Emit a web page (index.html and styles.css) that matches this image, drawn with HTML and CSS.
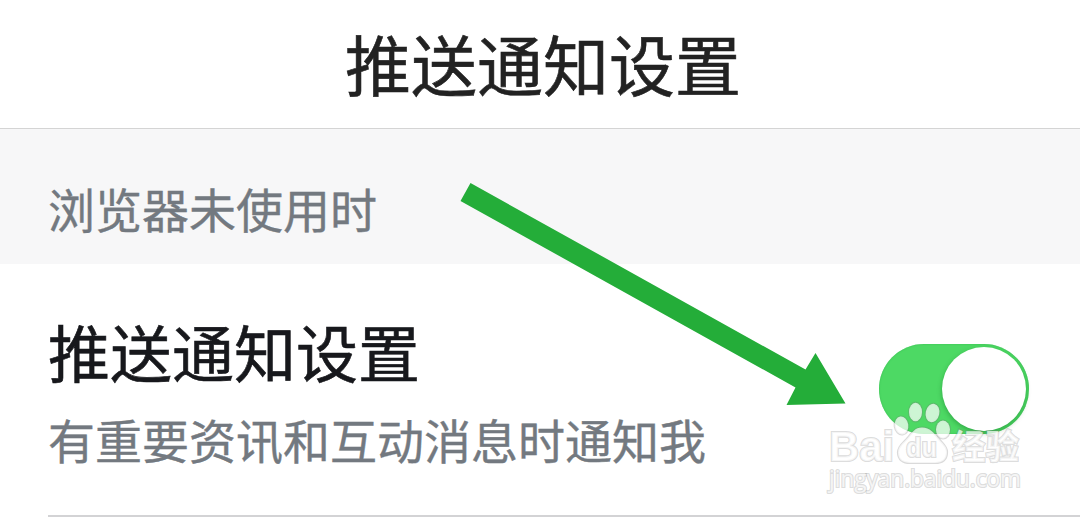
FILE: index.html
```
<!DOCTYPE html>
<html lang="zh-CN">

<head>
    <meta charset="UTF-8">
    <meta name="viewport" content="width=device-width, initial-scale=1.0">
    <title>推送通知设置</title>
    <link rel="stylesheet" href="styles.css">
</head>

<body>
    <header class="header">
        <h1 class="title">推送通知设置</h1>
    </header>
    <div class="section">浏览器未使用时</div>
    <main class="list">
        <div class="item">
            <div class="info">
                <div class="name">推送通知设置</div>
                <div class="desc">有重要资讯和互动消息时通知我</div>
            </div>
            <div class="switch">
                <div class="knob"></div>
            </div>
        </div>
    </main>

    <!-- arrow and watermark lie over the page -->
    <svg class="overlay" width="1080" height="517" viewBox="0 0 1080 517">
        <polygon class="arrow" points="470.5,183 805.5,369.5 815.5,353 845.5,403.5 786.5,405 795.5,387.5 460.5,201" />
        <g class="mark">
            <ellipse cx="901.5" cy="425.5" rx="6.8" ry="9" transform="rotate(-8 901.5 425.5)" />
            <ellipse cx="915.5" cy="412" rx="6.5" ry="9.3" />
            <ellipse cx="932.5" cy="413" rx="6.8" ry="9.3" transform="rotate(12 932.5 413)" />
            <ellipse cx="943" cy="429.5" rx="7" ry="9" />
            <path d="M922 427.5c-7 0-10 5-14 10-4 5-10 8-10 15 0 7 5 10.500 12 10.500h25c8 0 12-4 12-11 0-6-5-9-9-14-4-5-8-10.500-16-10.500z" />
            <text class="logo" x="829" y="461" textLength="65" lengthAdjust="spacingAndGlyphs">Bai</text>
            <text class="du" x="906" y="457" textLength="31" lengthAdjust="spacingAndGlyphs">du</text>
            <text class="cn" x="952" y="459" textLength="67" lengthAdjust="spacingAndGlyphs">经验</text>
            <text class="site" x="829" y="487" textLength="192" lengthAdjust="spacingAndGlyphs">jingyan.baidu.com</text>
        </g>
    </svg>
</body>

</html>
```
FILE: styles.css
```
body {
    margin: 0;
    height: 517px;
    overflow: hidden;
    background-color: #fff;
    font-family: "Noto Sans CJK SC", sans-serif;
}

.header {
    height: 128px;
    border-bottom: 1px solid #d4d4d4;
    text-align: center;
}

.title {
    margin: 0;
    padding: 0 0 0 6px;
    font-size: 66px;
    font-weight: 400;
    line-height: 124px;
    color: #222;
    -webkit-text-stroke: 0.6px #222;
}

.section {
    box-sizing: border-box;
    height: 135px;
    padding: 34px 48px 0;
    background-color: #f7f7f8;
    font-size: 47px;
    line-height: 90px;
    color: #737980;
    -webkit-text-stroke: 0.4px #737980;
}

.list {
    padding-left: 48px;
}

.item {
    box-sizing: border-box;
    display: flex;
    justify-content: space-between;
    height: 253px;
    padding: 46px 51px 0 0;
    border-bottom: 2px solid #d3d3d5;
}

.name {
    font-size: 62px;
    line-height: 82px;
    color: #17181c;
    -webkit-text-stroke: 0.6px #17181c;
}

.desc {
    font-size: 47px;
    line-height: 94px;
    color: #737980;
    -webkit-text-stroke: 0.4px #737980;
}

.switch {
    box-sizing: border-box;
    display: flex;
    justify-content: flex-end;
    width: 150px;
    height: 90px;
    margin-top: 34px;
    padding: 3px 3px 0 0;
    border-radius: 45px;
    background-color: #4dd964;
    box-shadow: inset 0 0 2px #36b950;
}

.knob {
    width: 84px;
    height: 84px;
    border-radius: 50%;
    background-color: #fff;
    box-shadow: 0 2px 5px rgba(0, 80, 20, 0.35);
}

.overlay {
    position: absolute;
    top: 0;
    left: 0;
}

.arrow {
    fill: #24ad39;
}

.mark {
    fill: rgba(255, 255, 255, 0.72);
    stroke: rgba(120, 120, 120, 0.27);
    stroke-width: 2.2px;
    paint-order: stroke;
}

.logo,
.du {
    font-family: "Liberation Sans", sans-serif;
    font-weight: 700;
}

.logo {
    font-size: 43px;
}

.du {
    font-size: 27px;
}

.cn {
    font-size: 34px;
    font-weight: 700;
}

.site {
    font-family: "Open Sans", sans-serif;
    font-size: 23px;
}
```
